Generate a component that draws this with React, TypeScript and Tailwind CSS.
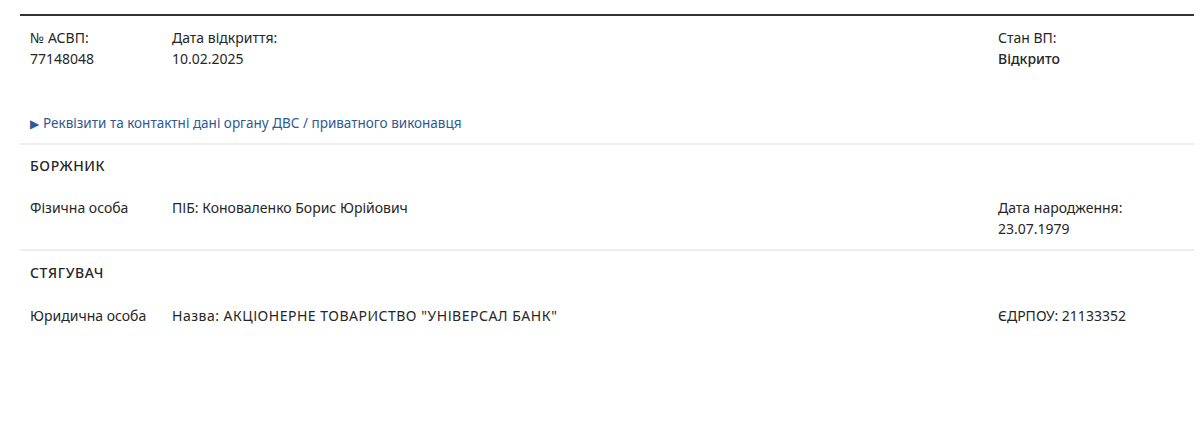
import React from "react";

export default function App() {
  const font = { fontFamily: '"Noto Sans", "Open Sans", sans-serif' };
  return (
    <div className="w-[1202px] h-[428px] bg-white text-[#262626] text-[14px] leading-[21px]" style={font}>
      <div className="ml-[20px] w-[1174px] pt-[14px]">
        <div className="h-[2px] bg-[#333]" />
        <div className="px-[10px] pt-[11px] grid grid-cols-[142px_1fr_186px]">
          <div>
            <div>№ АСВП:</div>
            <div>77148048</div>
          </div>
          <div>
            <div>Дата відкриття:</div>
            <div>10.02.2025</div>
          </div>
          <div>
            <div>Стан ВП:</div>
            <div className="font-medium">Відкрито</div>
          </div>
        </div>
        <div className="px-[10px] pt-[44px] pb-[9px] text-[13.5px] text-[#2f5a92] flex items-center gap-[4px]">
          <span className="text-[12px]">&#9654;</span>
          <span>Реквізити та контактні дані органу ДВС / приватного виконавця</span>
        </div>
        <div className="h-[2px] bg-[#eeeeee]" />
        <div className="px-[10px] pt-[10px] font-medium tracking-[0.6px]">БОРЖНИК</div>
        <div className="px-[10px] pt-[21px] pb-[10px] grid grid-cols-[142px_1fr_186px]">
          <div>Фізична особа</div>
          <div>ПІБ: Коноваленко Борис Юрійович</div>
          <div>
            <div>Дата народження:</div>
            <div>23.07.1979</div>
          </div>
        </div>
        <div className="h-[2px] bg-[#eeeeee]" />
        <div className="px-[10px] pt-[11px] font-medium tracking-[0.6px]">СТЯГУВАЧ</div>
        <div className="px-[10px] pt-[22px] grid grid-cols-[142px_1fr_186px]">
          <div>Юридична особа</div>
          <div className="tracking-[0.5px]">Назва: АКЦІОНЕРНЕ ТОВАРИСТВО "УНІВЕРСАЛ БАНК"</div>
          <div>ЄДРПОУ: 21133352</div>
        </div>
      </div>
    </div>
  );
}
